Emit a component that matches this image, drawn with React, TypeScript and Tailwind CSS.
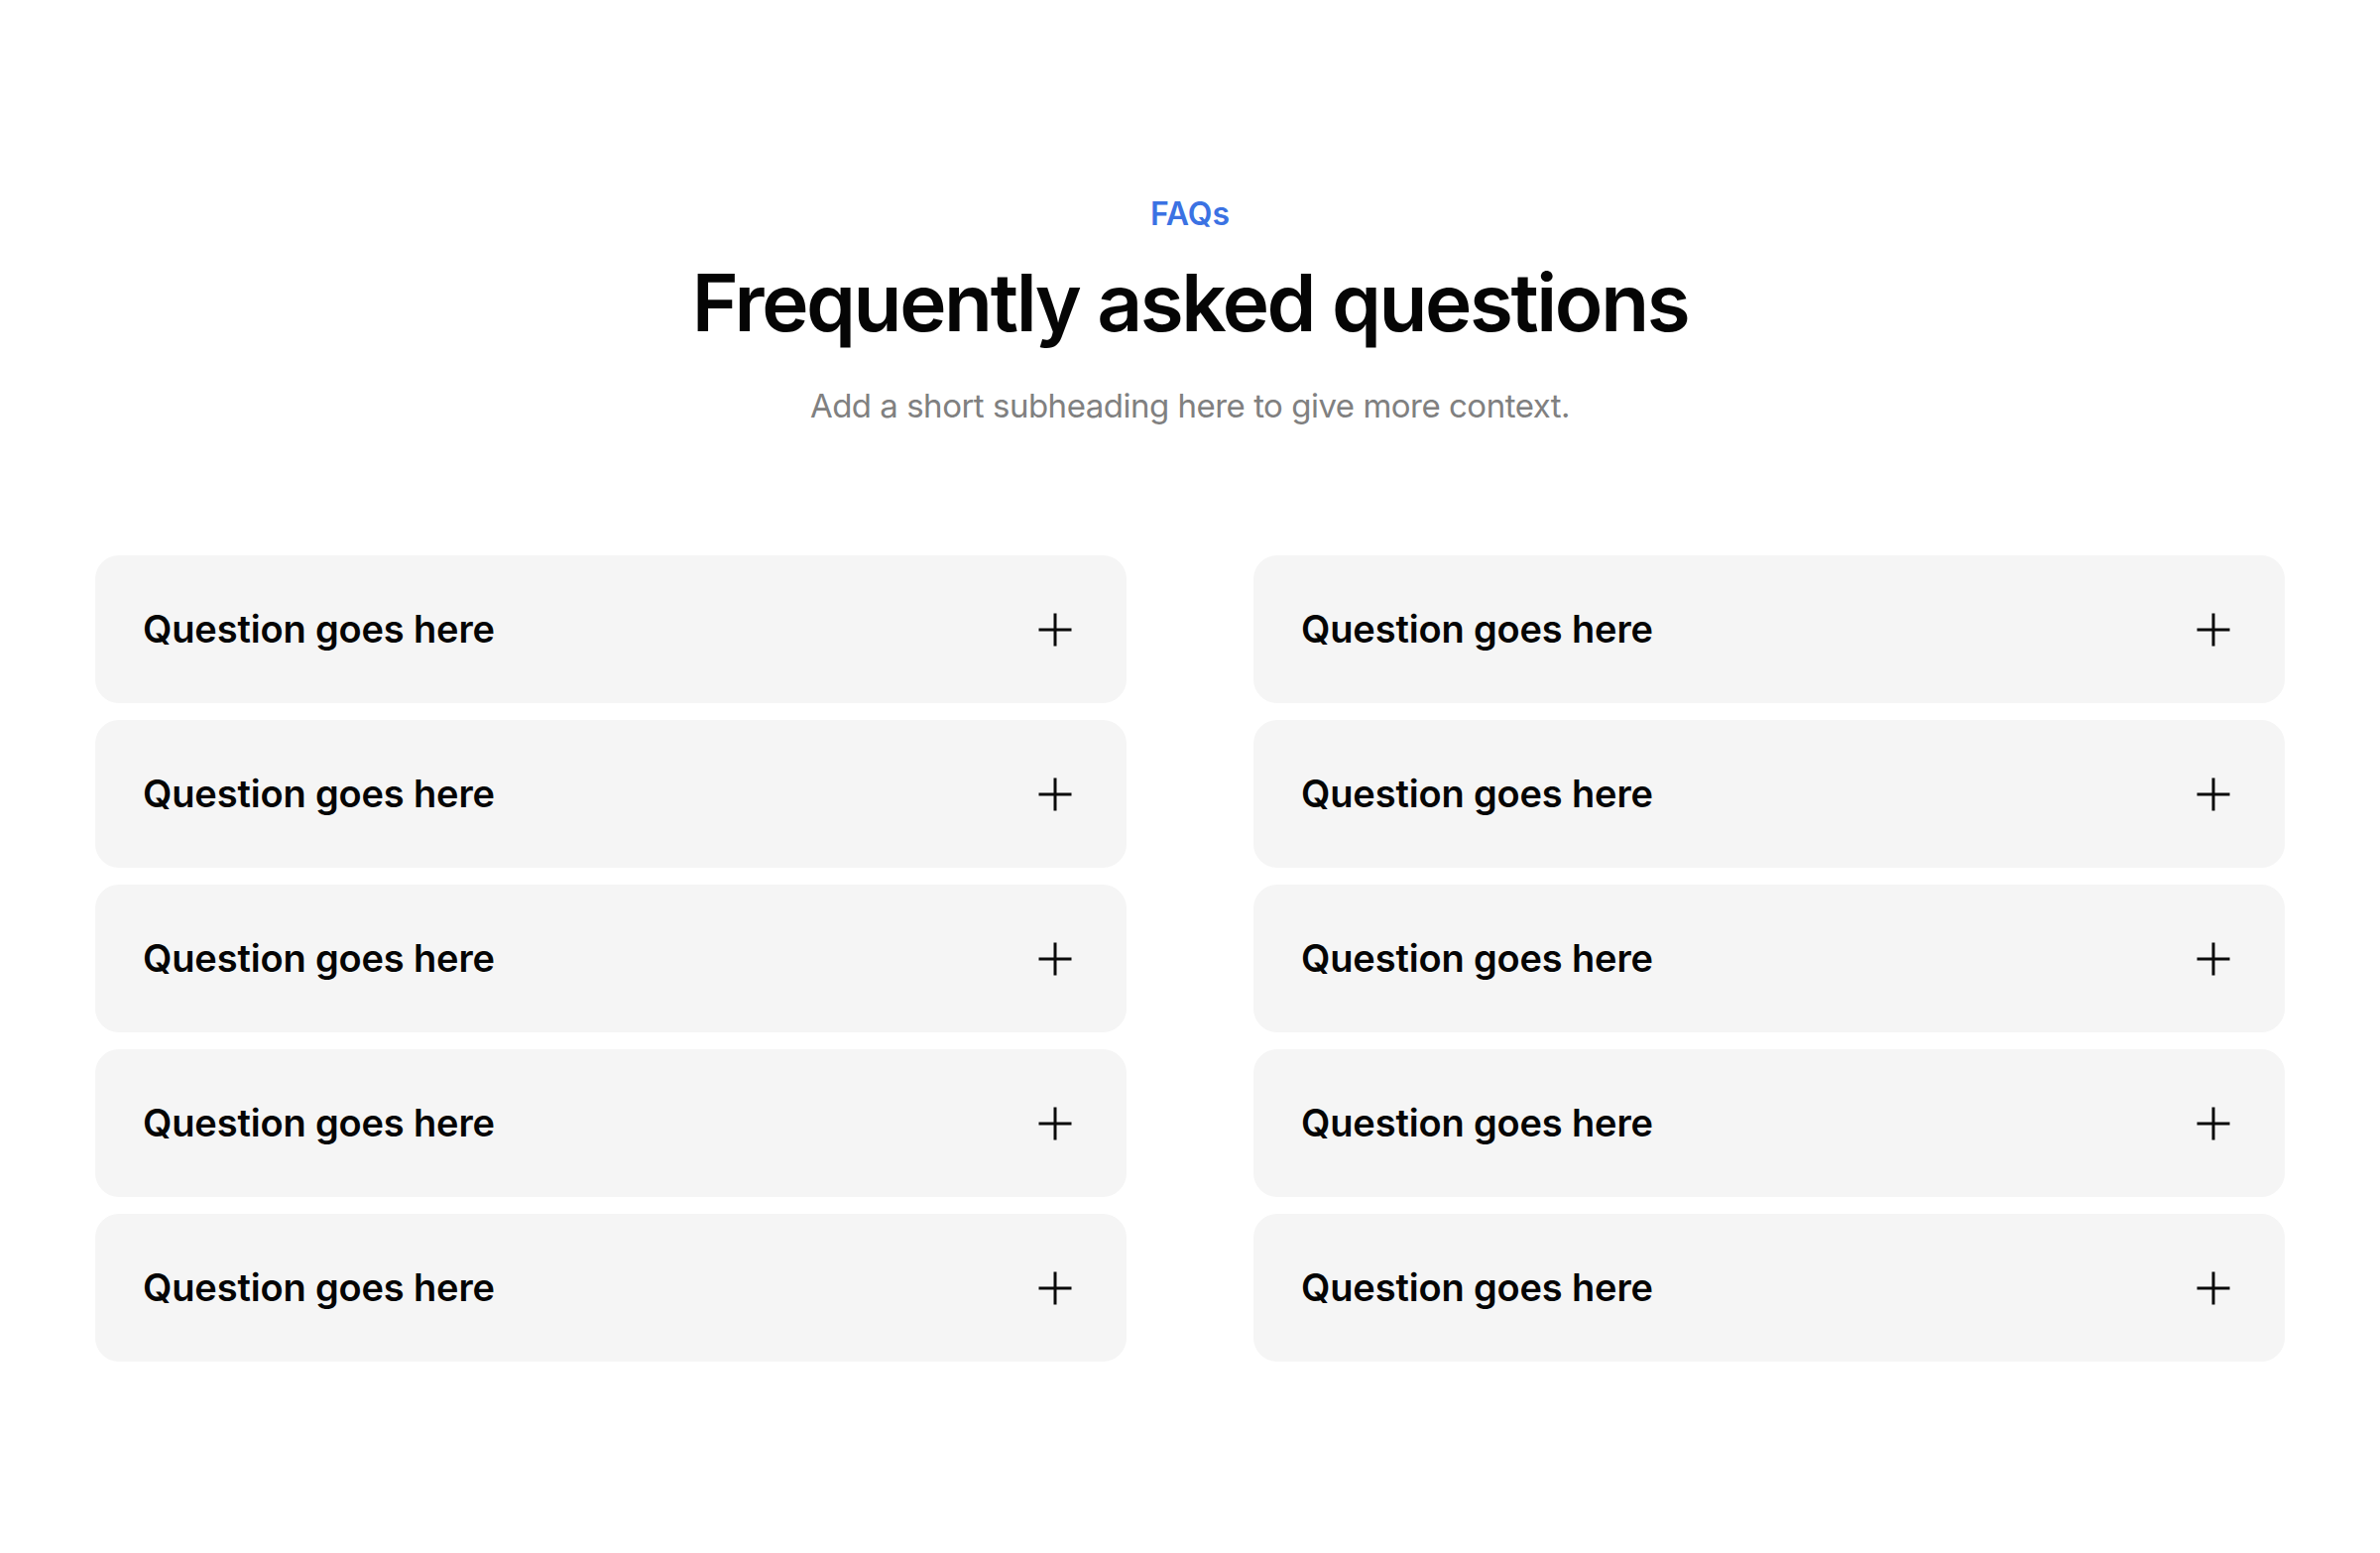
import React from "react";

function PlusIcon() {
  return (
    <svg width="36" height="36" viewBox="0 0 36 36" fill="none" aria-hidden="true">
      <path d="M18 1.5V34.5M1.5 18H34.5" stroke="#0a0a0a" strokeWidth="3" />
    </svg>
  );
}

function Card() {
  return (
    <div className="flex h-[149px] items-center justify-between rounded-[24px] bg-[#f5f5f5] pl-[48px] pr-[54px]">
      <span className="-mt-[2px] text-[38px] font-semibold leading-none tracking-[-0.004em] text-[#050505]">
        Question goes here
      </span>
      <PlusIcon />
    </div>
  );
}

export default function App() {
  const rows = [0, 1, 2, 3, 4];
  return (
    <div
      className="min-h-screen bg-white"
      style={{ fontFamily: "Inter, 'Noto Sans', sans-serif" }}
    >
      <div className="flex flex-col items-center pt-[200px]">
        <p className="text-[32px] font-semibold leading-none text-[#3b72e3]">FAQs</p>
        <h1 className="mt-[33px] text-[80px] font-semibold leading-none tracking-[-0.03em] text-[#050505]">
          Frequently asked questions
        </h1>
        <p className="mt-[48px] text-[33px] leading-none tracking-[-0.015em] text-[#808080]">
          Add a short subheading here to give more context.
        </p>
      </div>
      <div className="mt-[134px] grid grid-cols-2 gap-x-[128px] px-[96px]">
        <div className="flex flex-col gap-[17px]">
          {rows.map((r) => (
            <Card key={r} />
          ))}
        </div>
        <div className="flex flex-col gap-[17px]">
          {rows.map((r) => (
            <Card key={r} />
          ))}
        </div>
      </div>
    </div>
  );
}
